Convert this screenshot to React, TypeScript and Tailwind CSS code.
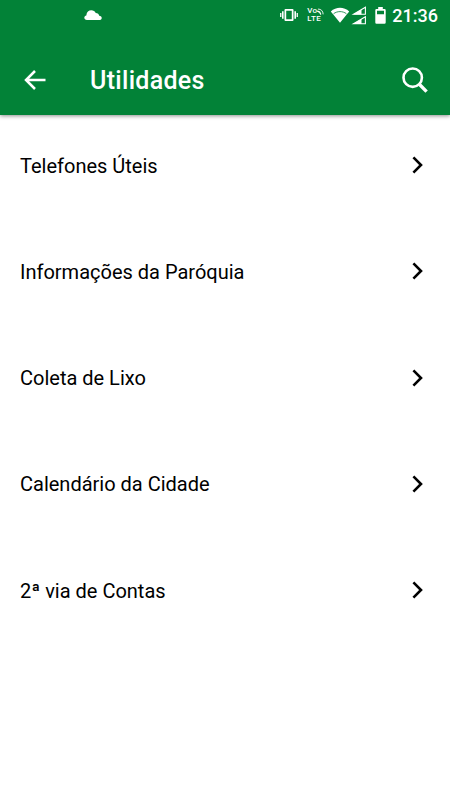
interface IIcon {
  className?: string;
}

const IcnCloud = ({ className }: IIcon) => (
  <svg className={className} viewBox="0 0 18 10" fill="currentColor">
    <path d="M3 10C1.3 10 .3 9 .3 7.6c0-1.2.9-2 2-2.2C2.700 2 4.700.3 7.300.3c2 0 3.700 1 4.400 2.600 2 0 3.300 1.100 3.500 2.800 1.600.1 2.500 1 2.500 2.200 0 1.300-1 2.100-2.500 2.100Z" />
  </svg>
);

const IcnVibrate = ({ className }: IIcon) => (
  <svg className={className} viewBox="0 0 18 14" fill="currentColor">
    <path
      fillRule="evenodd"
      d="M5.500 1h7q1 0 1 1v10q0 1-1 1h-7q-1 0-1-1V2q0-1 1-1Zm.7 1.800v8.400h5.600V2.800Z"
    />
    <path d="M2 3.200h1.600v7.600H2ZM14.400 3.200h1.600v7.600h-1.600ZM.1 5h1.300v4H.1ZM16.600 5h1.300v4h-1.300Z" />
  </svg>
);

const IcnWifi = ({ className }: IIcon) => (
  <svg className={className} viewBox="0 0 20 16">
    <path d="M.8 4.400C6-.4 14-.4 19.200 4.400L10 15.700Z" fill="currentColor" />
    <path
      d="M3.600 6.700C7.200 3.900 12.800 3.900 16.400 6.700"
      fill="none"
      stroke="#028237"
      strokeWidth=".8"
    />
  </svg>
);

const IcnSignal = ({ className }: IIcon) => (
  <svg className={className} viewBox="0 0 16 19">
    <path
      d="M2.500 8.300L14.400 1.300V8.300ZM2.500 17.800L14.400 10.800V17.800Z"
      fill="none"
      stroke="currentColor"
      strokeWidth="1.100"
    />
    <path
      d="M2 8.600L10.500 3.600V8.600ZM2 18L10.500 13V18Z"
      fill="currentColor"
    />
  </svg>
);

const IcnBattery = ({ className }: IIcon) => (
  <svg className={className} viewBox="0 0 11 17" fill="currentColor">
    <path
      fillRule="evenodd"
      d="M3.200 0h4.600v2h1.700q1.200 0 1.200 1.200v12.400q0 1.200-1.200 1.200h-8Q.3 16.800.3 15.600V3.200Q.3 2 1.500 2h1.700ZM2 3.700v3.500h7V3.700Z"
    />
  </svg>
);

const IcnCall = ({ className }: IIcon) => (
  <svg
    className={className}
    viewBox="0 0 8 8"
    fill="none"
    stroke="currentColor"
    strokeLinecap="round"
  >
    <path d="M1.500 1.200C4.700 1.200 7 3.500 7 6.800" strokeWidth="1" />
    <path d="M.8 3.700C2.500 4 3.800 5.200 4.200 7" strokeWidth="1.500" />
  </svg>
);

const IcnBack = ({ className }: IIcon) => (
  <svg
    className={className}
    viewBox="0 0 22 20"
    fill="none"
    stroke="currentColor"
    strokeWidth="2.500"
  >
    <path d="M11 1L2 10L11 19M2 10H21.500" />
  </svg>
);

const IcnSearch = ({ className }: IIcon) => (
  <svg
    className={className}
    viewBox="0 0 26 26"
    fill="none"
    stroke="currentColor"
  >
    <circle cx="10.700" cy="10.700" r="9.200" strokeWidth="2.600" />
    <path d="M17.300 17.300L24.600 24.600" strokeWidth="3.400" />
  </svg>
);

const IcnChevron = ({ className }: IIcon) => (
  <svg
    className={className}
    viewBox="0 0 11 18"
    fill="none"
    stroke="currentColor"
    strokeWidth="2.600"
  >
    <path d="M1.400 1.400L9 9L1.400 16.600" />
  </svg>
);

const items = [
  "Telefones Úteis",
  "Informações da Paróquia",
  "Coleta de Lixo",
  "Calendário da Cidade",
  "2ª via de Contas",
];

const StatusBar = () => (
  <div className="flex h-[31px] items-center pl-[84px] pr-3">
    <IcnCloud className="h-[10px] w-[18px] -mt-[2px]" />
    <div className="ml-auto flex items-center">
      <IcnVibrate className="h-[14px] w-[18px] -mt-px" />
      <div className="ml-[9px] flex w-[18px] flex-col text-[8px] font-medium leading-[8px] tracking-[0.3px] -mt-px">
        <div className="flex items-center">
          <span>Vo</span>
          <IcnCall className="h-[7px] w-[7px] shrink-0" />
        </div>
        <span>LTE</span>
      </div>
      <IcnWifi className="ml-[5px] h-4 w-5 -mt-px" />
      <IcnSignal className="ml-[1px] h-[19px] w-4" />
      <IcnBattery className="ml-2 h-[17px] w-[11px] -mt-px" />
      <span className="ml-[6px] text-[18px] font-medium leading-[31px]">
        21:36
      </span>
    </div>
  </div>
);

const App = () => {
  return (
    <div className="min-h-screen bg-white font-['Roboto',sans-serif] text-black">
      <header className="h-[115px] bg-[#028237] text-white shadow-[0_1px_4px_rgba(0,0,0,0.45)]">
        <StatusBar />
        <div className="flex h-[98px] items-center pl-[23.5px] pr-[22px]">
          <button aria-label="Voltar">
            <IcnBack className="h-5 w-[22px]" />
          </button>
          <h1 className="ml-[44.500px] pt-[2px] text-[25px] font-medium tracking-[0.3px]">
            Utilidades
          </h1>
          <button aria-label="Buscar" className="ml-auto">
            <IcnSearch className="h-[26px] w-[26px]" />
          </button>
        </div>
      </header>
      <ul className="-mt-[2.300px]">
        {items.map((item) => (
          <li
            key={item}
            className="flex h-[106.200px] items-center justify-between pl-5 pr-[27px] text-[20px]"
          >
            <span>{item}</span>
            <IcnChevron className="h-[18px] w-[11px] -mt-px" />
          </li>
        ))}
      </ul>
    </div>
  );
};

export default App;
